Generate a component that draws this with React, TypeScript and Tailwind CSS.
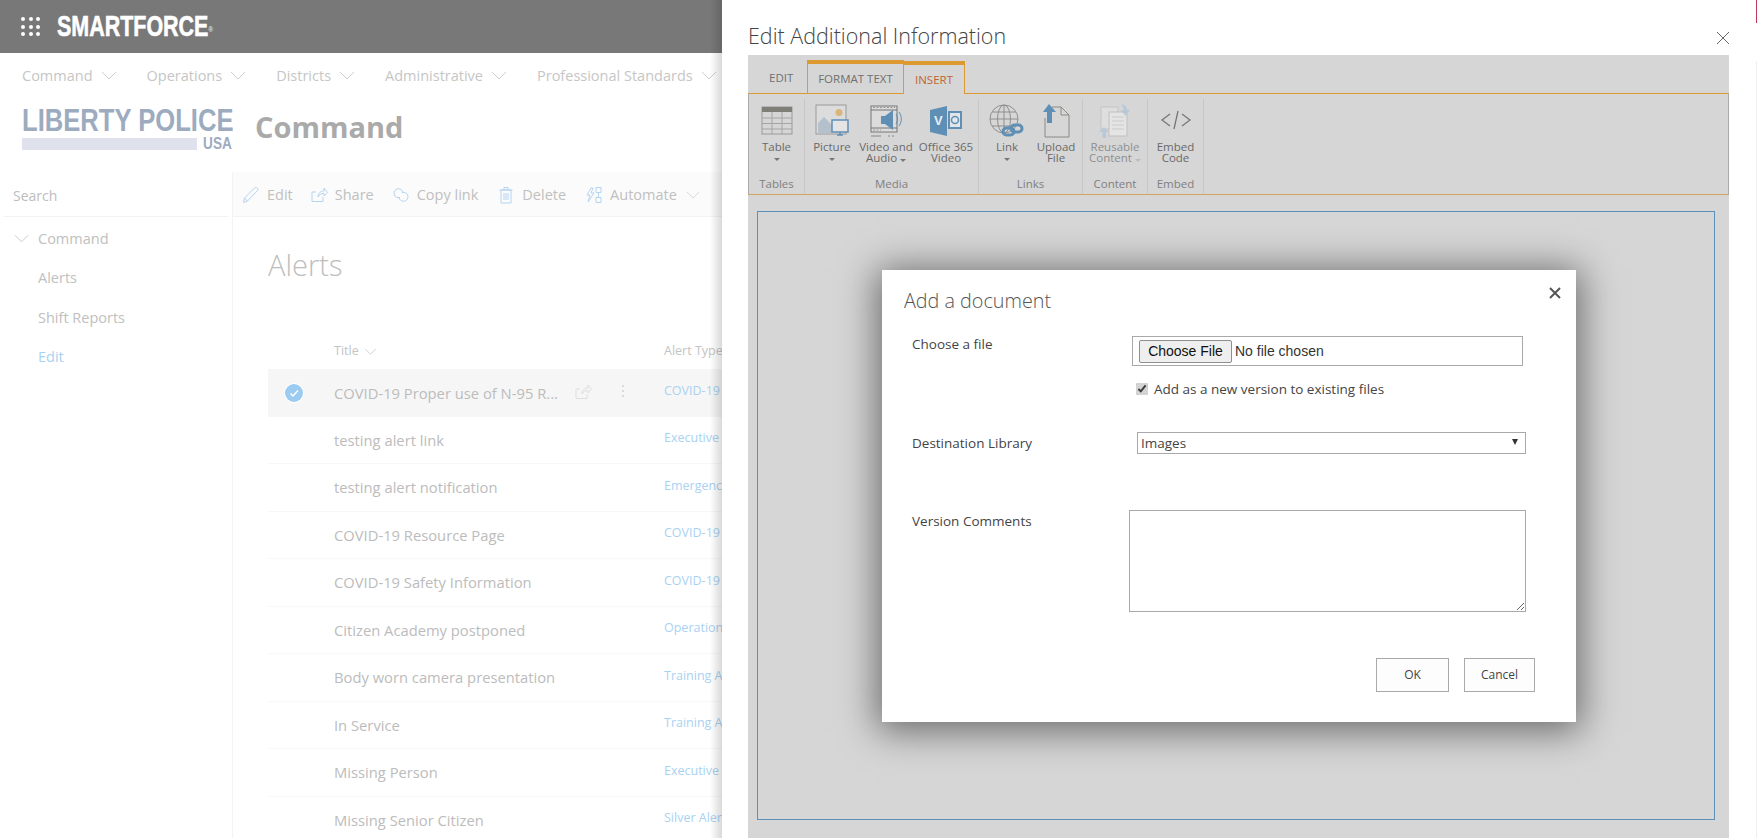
const font = "font-['Open_Sans','Liberation_Sans',sans-serif]";

const navItems = ["Command", "Operations", "Districts", "Administrative", "Professional Standards"];

const rows = [
  { title: "COVID-19 Proper use of N-95 R...", type: "COVID-19", selected: true },
  { title: "testing alert link", type: "Executive" },
  { title: "testing alert notification", type: "Emergency" },
  { title: "COVID-19 Resource Page", type: "COVID-19" },
  { title: "COVID-19 Safety Information", type: "COVID-19" },
  { title: "Citizen Academy postponed", type: "Operations" },
  { title: "Body worn camera presentation", type: "Training A" },
  { title: "In Service", type: "Training A" },
  { title: "Missing Person", type: "Executive" },
  { title: "Missing Senior Citizen", type: "Silver Alert" },
];

function Chevron({ className }: { className?: string }) {
  return (
    <svg viewBox="0 0 16 9" className={className} fill="none" stroke="currentColor" strokeWidth="1">
      <path d="M1 1l7 7 7-7" />
    </svg>
  );
}

function CommandIcon({ kind }: { kind: string }) {
  return (
    <svg viewBox="0 0 18 18" className="h-[18px] w-[18px] text-[#b4d4f0]" fill="none" stroke="currentColor" strokeWidth="1">
      {kind === "edit" && <path d="M1.500 16.500l1-4.500L12.500 2c.8-.8 2-.8 2.800 0s.8 2 0 2.800L5.500 15zM2.500 12l3 3" />}
      {kind === "share" && <path d="M13 11v4.500H2V6h4M8 11c0-4 2.500-6 6-6V2l3.500 4.500L14 10V7.500c-3 0-5 1-6 3.500z" />}
      {kind === "link" && (
        <>
          <path d="M8 11.500a4.500 4.500 0 1 1 3-5" />
          <path d="M10 6.500a4.500 4.500 0 1 1-3 5" />
        </>
      )}
      {kind === "delete" && <path d="M4 4h10v13H4zM2.500 4h13M7 4V1.500h4V4M7 7v7M9 7v7M11 7v7" />}
      {kind === "automate" && <path d="M11 1.500h5v5h-5zM11 11.500h5v5h-5zM13.500 6.500v5M6 2L2 9h3l-2 7 6-9H6l2-5z" />}
    </svg>
  );
}

function Background() {
  return (
    <div className={`h-[838px] w-[722px] overflow-hidden bg-white ${font}`}>
      <div className="flex h-[53px] items-center bg-[#787878]">
        <div className="ml-[21px] grid w-[19px] grid-cols-3 gap-[3.500px]">
          {[0, 1, 2, 3, 4, 5, 6, 7, 8].map((i) => (
            <span key={i} className="h-[4px] w-[4px] rounded-full bg-white" />
          ))}
        </div>
        <span className="ml-[17px] origin-left scale-x-[0.74] font-['Liberation_Sans',sans-serif] text-[29px] font-bold whitespace-nowrap text-white [-webkit-text-stroke:0.6px_white]">
          SMARTFORCE<sup className="text-[8px] font-normal [-webkit-text-stroke:0]">®</sup>
        </span>
      </div>
      <div className="flex h-[45px] items-center pl-[22px] text-[14.500px] text-[#c6c6c6]">
        {navItems.map((item) => (
          <div key={item} className="mr-[30px] flex shrink-0 items-center gap-[8px]">
            <span>{item}</span>
            <Chevron className="h-[9px] w-[16px] text-[#cfcfcf]" />
          </div>
        ))}
      </div>
      <div className="flex h-[74px] items-start pl-[22px]">
        <div className="mt-[10px] w-[210px] shrink-0">
          <div className="origin-left scale-x-[0.8] font-['Liberation_Sans',sans-serif] text-[32px] leading-[25px] font-bold whitespace-nowrap text-[#9dabbf]">
            LIBERTY POLICE
          </div>
          <div className="mt-[5px] flex items-center justify-between">
            <div className="h-[12px] w-[175px] bg-[#dfe2ec]" />
            <span className="origin-right scale-x-[0.85] font-['Liberation_Sans',sans-serif] text-[16px] leading-[12px] font-bold text-[#9dabbf]">USA</span>
          </div>
        </div>
        <div className="mt-[11px] ml-[23px] text-[29px] leading-[36px] font-bold text-[#aaaaaa]">Command</div>
      </div>
      <div className="flex">
        <div className="h-[666px] w-[233px] shrink-0 border-r border-[#f3f3f3]">
          <div className="mx-[4px] flex h-[45px] items-center border-b border-[#f3f3f3] pt-[2px] pl-[9px] text-[14px] text-[#bdbdbd]">Search</div>
          <div className="mt-[2px] flex h-[39.500px] items-center pl-[14px] text-[14.500px] text-[#c0c0c0]">
            <Chevron className="mr-[9px] h-[9px] w-[15px] text-[#c8c8c8]" />
            Command
          </div>
          <div className="flex h-[39.500px] items-center pl-[38px] text-[14.500px] text-[#c0c0c0]">Alerts</div>
          <div className="flex h-[39.500px] items-center pl-[38px] text-[14.500px] text-[#c0c0c0]">Shift Reports</div>
          <div className="flex h-[39.500px] items-center pl-[38px] text-[14.500px] text-[#a9d2f2]">Edit</div>
        </div>
        <div className="min-w-0 flex-1">
          <div className="flex h-[45px] items-center border-b border-[#f3f3f3] bg-[#fbfbfb] pt-[2px] pl-[9px] text-[14.500px] whitespace-nowrap text-[#c0c0c0]">
            <div className="mr-[17px] flex items-center gap-[7px]"><CommandIcon kind="edit" />Edit</div>
            <div className="mr-[18px] flex items-center gap-[7px]"><CommandIcon kind="share" />Share</div>
            <div className="mr-[19px] flex items-center gap-[7px]"><CommandIcon kind="link" />Copy link</div>
            <div className="mr-[19px] flex items-center gap-[7px]"><CommandIcon kind="delete" />Delete</div>
            <div className="flex items-center gap-[7px]"><CommandIcon kind="automate" />Automate<Chevron className="ml-[2px] h-[8px] w-[14px] text-[#d4d4d4]" /></div>
          </div>
          <div className="pl-[35px]">
            <div className="h-[106px] pt-[26px] text-[29px] leading-[44px] font-light text-[#bdbdbd]">Alerts</div>
            <div className="flex h-[46px] items-center pt-[10px] text-[12.500px] whitespace-nowrap text-[#c4c4c4]">
              <div className="ml-[66px] flex w-[330px] shrink-0 items-center gap-[5px]">
                Title
                <Chevron className="h-[7px] w-[13px]" />
              </div>
              <div>Alert Type</div>
            </div>
            {rows.map((row) => (
              <div
                key={row.title}
                className={`flex h-[47.500px] items-center overflow-hidden whitespace-nowrap ${row.selected ? "bg-[#f6f6f6]" : "border-b border-[#f8f8f8]"}`}
              >
                <div className="flex w-[66px] shrink-0 pl-[17px]">
                  {row.selected && (
                    <span className="flex h-[18px] w-[18px] items-center justify-center rounded-full bg-[#9ccbf1] ring-1 ring-white">
                      <svg viewBox="0 0 10 10" className="h-[10px] w-[10px]" fill="none" stroke="white" strokeWidth="1.500">
                        <path d="M1.500 5.500l2.500 2.500 5-5.500" />
                      </svg>
                    </span>
                  )}
                </div>
                <div className="relative w-[330px] shrink-0 text-[14.750px] text-[#bcbcbc]">
                  {row.title}
                  {row.selected && (
                    <>
                      <svg viewBox="0 0 18 18" className="absolute top-[1px] left-[240px] h-[18px] w-[18px] text-[#dedede]" fill="none" stroke="currentColor" strokeWidth="1">
                        <path d="M13 11v4.500H2V6h4M8 11c0-4 2.500-6 6-6V2l3.500 4.500L14 10V7.500c-3 0-5 1-6 3.500z" />
                      </svg>
                      <span className="absolute top-[3px] left-[288px] flex flex-col gap-[3px]">
                        <i className="h-[2px] w-[2px] rounded-full bg-[#d0d0d0]" />
                        <i className="h-[2px] w-[2px] rounded-full bg-[#d0d0d0]" />
                        <i className="h-[2px] w-[2px] rounded-full bg-[#d0d0d0]" />
                      </span>
                    </>
                  )}
                </div>
                <div className="mb-[2px] shrink-0 text-[12.500px] text-[#a9d2f2]">{row.type}</div>
              </div>
            ))}
          </div>
        </div>
      </div>
    </div>
  );
}

function TableIcon() {
  return (
    <svg viewBox="0 0 32 29" className="h-[29px] w-[32px]">
      <rect x="1" y="1" width="30" height="27" fill="#d6d6d6" stroke="#999" />
      <rect x="1" y="1" width="30" height="5" fill="#7f7f78" />
      <path d="M1 12h30M1 17.500h30M1 23h30M11 6v22M21 6v22" stroke="#a5a5a5" />
    </svg>
  );
}

function PictureIcon() {
  return (
    <svg viewBox="0 0 34 34" className="h-[34px] w-[34px]">
      <rect x="1" y="1" width="30" height="29" fill="#dcdcdc" stroke="#9a9a9a" />
      <circle cx="24" cy="8.500" r="3.500" fill="#d8b67a" />
      <path d="M3 29V19l6-6 8 8v8z" fill="#b4c1cc" />
      <rect x="17" y="16" width="16" height="12" fill="#e4e4e4" stroke="#5f8fb5" strokeWidth="1.500" />
      <path d="M22 31h6M25 28v3" stroke="#5f8fb5" strokeWidth="1.500" />
    </svg>
  );
}

function VideoIcon() {
  return (
    <svg viewBox="0 0 36 34" className="ml-[3px] h-[34px] w-[36px]">
      <rect x="1" y="2" width="26" height="26" fill="#dcdcdc" stroke="#777" />
      <path d="M1 6h26M1 24h26" stroke="#777" />
      <path d="M3 3.500h22M3 26h8" stroke="#999" strokeDasharray="2 1.500" />
      <path d="M11 12h4l8-6v20l-8-6h-4z" fill="#5f8fb5" />
      <path d="M26 10c2 3 2 7 0 10M29 8c3 4 3 10 0 14" stroke="#5f8fb5" fill="none" />
      <path d="M1 32h10M18 32h2M22 32h2" stroke="#888" />
    </svg>
  );
}

function OfficeVideoIcon() {
  return (
    <svg viewBox="0 0 34 32" className="h-[32px] w-[34px]">
      <path d="M1 5L18 1v30L1 27z" fill="#5f8fb5" />
      <text x="5" y="20" fontSize="13" fontWeight="700" fill="#e6eef4" fontFamily="Liberation Sans">V</text>
      <rect x="20" y="7" width="12" height="16" fill="#e2e6ea" stroke="#5f8fb5" strokeWidth="2" />
      <circle cx="26" cy="15" r="3.500" fill="none" stroke="#5f8fb5" strokeWidth="1.500" />
    </svg>
  );
}

function LinkIcon() {
  return (
    <svg viewBox="0 0 36 34" className="h-[34px] w-[36px]">
      <g fill="none" stroke="#8f8f8f">
        <circle cx="15" cy="15" r="14" />
        <ellipse cx="15" cy="15" rx="6.500" ry="14" />
        <path d="M15 1v28M1 15h28M3 8h24M3 22h24" />
      </g>
      <g fill="none" stroke="#5f8fb5" strokeWidth="3">
        <rect x="14" y="24" width="11" height="7" rx="3.500" />
        <rect x="22" y="21" width="11" height="7" rx="3.500" />
      </g>
    </svg>
  );
}

function UploadIcon() {
  return (
    <svg viewBox="0 0 28 34" className="h-[34px] w-[28px]">
      <path d="M3 33V14M10 3h9l8 8v22H3" fill="none" stroke="#8a8a85" />
      <path d="M19 3v8h8" fill="none" stroke="#8a8a85" />
      <path d="M7 0l7 8h-4v11H5V8H1z" fill="#5f8fb5" />
    </svg>
  );
}

function ReusableIcon() {
  return (
    <svg viewBox="0 0 36 36" className="h-[36px] w-[36px]">
      <rect x="4" y="4" width="17" height="22" fill="#dedede" stroke="#c4c4c4" />
      <rect x="12" y="9" width="18" height="24" fill="#e4e4e4" stroke="#c0c0c0" />
      <path d="M15 14h12M15 18h12M15 22h12M15 26h12" stroke="#cacaca" />
      <path d="M25 1c3 1 5 3 5 6h3l-4.500 6L24 7h3c0-2-1-3-2-4z" fill="#b7c9d8" />
      <path d="M7 24l4.500 5H9v6H6c-1-2-1-4 0-6H2z" fill="#b7c9d8" />
    </svg>
  );
}

function EmbedIcon() {
  return (
    <svg viewBox="0 0 32 20" className="mb-[2px] h-[20px] w-[32px]" fill="none" stroke="#777" strokeWidth="1.300">
      <path d="M10 4l-8 6 8 6M22 4l8 6-8 6M18 1l-4 18" />
    </svg>
  );
}

function Arrow({ light }: { light?: boolean }) {
  return <span className={`inline-block h-0 w-0 border-x-[3px] border-t-[3px] border-x-transparent ${light ? "border-t-[#bbbbbb]" : "border-t-[#777777]"}`} />;
}

function RibbonButton({
  icon,
  label,
  second,
  width,
  arrow,
  dim,
}: {
  icon: React.ReactNode;
  label: string;
  second?: React.ReactNode;
  width: string;
  arrow?: boolean;
  dim?: boolean;
}) {
  return (
    <div className={`flex shrink-0 flex-col items-center ${width} text-[11.500px] leading-[11px] ${dim ? "text-[#8e8e8e]" : "text-[#6a6a6a]"}`}>
      <div className="mt-[3px] flex h-[37px] items-center justify-center">{icon}</div>
      <div className="mt-[2px] whitespace-nowrap">{label}</div>
      {second && <div className="whitespace-nowrap">{second}</div>}
      {arrow && <div className="mt-[3px] flex h-[8px] items-center"><Arrow /></div>}
    </div>
  );
}

function RibbonGroup({ label, width, children, start }: { label: string; width: string; children: React.ReactNode; start?: boolean }) {
  return (
    <div className={`flex ${width} shrink-0 flex-col border-r border-[#c8c8c8]`}>
      <div className={`flex h-[77px] ${start ? "justify-start" : "justify-center"}`}>{children}</div>
      <div className="text-center text-[11.500px] leading-[16px] text-[#808080]">{label}</div>
    </div>
  );
}

function Ribbon() {
  return (
    <>
      <div className="flex h-[37px] items-end pl-[21px] text-[11.500px] leading-[16px]">
        <div className="flex h-[31px] w-[38px] items-center text-[#707070]">EDIT</div>
        <div className="flex h-[33px] w-[97px] items-center justify-center border-x border-t-[4px] border-x-[#dd9a30] border-t-[#dd9a30] text-[#6f6f6f]">FORMAT TEXT</div>
        <div className="relative top-[1px] z-10 flex h-[33px] w-[61px] items-center justify-center border-r border-t-[4px] border-r-[#dd9a30] border-t-[#dd9a30] bg-[#d6d6d6] text-[#c0652e]">INSERT</div>
      </div>
      <div className="flex h-[102px] border-x border-b border-t border-x-[#aaaaaa] border-t-[#dd9a30] border-b-[#d2a35c] pt-[5px]">
        <RibbonGroup label="Tables" width="w-[56px]">
          <RibbonButton icon={<TableIcon />} label="Table" width="w-[50px]" arrow />
        </RibbonGroup>
        <RibbonGroup label="Media" width="w-[174px]" start>
          <RibbonButton icon={<PictureIcon />} label="Picture" width="w-[54px]" arrow />
          <RibbonButton icon={<VideoIcon />} label="Video and" second={<>Audio <Arrow /></>} width="w-[54px]" />
          <RibbonButton icon={<OfficeVideoIcon />} label="Office 365" second="Video" width="w-[66px]" />
        </RibbonGroup>
        <RibbonGroup label="Links" width="w-[104px]" start>
          <RibbonButton icon={<LinkIcon />} label="Link" width="w-[56px]" arrow />
          <RibbonButton icon={<UploadIcon />} label="Upload" second="File" width="w-[42px]" />
        </RibbonGroup>
        <RibbonGroup label="Content" width="w-[65px]">
          <RibbonButton icon={<ReusableIcon />} label="Reusable" second={<>Content <Arrow light /></>} width="w-[60px]" dim />
        </RibbonGroup>
        <RibbonGroup label="Embed" width="w-[56px]">
          <RibbonButton icon={<EmbedIcon />} label="Embed" second="Code" width="w-[50px]" />
        </RibbonGroup>
      </div>
    </>
  );
}

function Dialog() {
  return (
    <div className="absolute top-[270px] left-[160px] h-[452px] w-[694px] bg-white pt-[16px] text-[13.500px] text-[#444444] shadow-[0_4px_35px_5px_rgba(0,0,0,0.5)]">
      <svg viewBox="0 0 12 12" className="absolute top-[17px] right-[15px] h-[12px] w-[12px]" fill="none" stroke="#555" strokeWidth="2">
        <path d="M1 1l10 10M11 1L1 11" />
      </svg>
      <div className="pl-[22px] text-[19.750px] leading-[30px] font-light text-[#555555]">Add a document</div>
      <div className="mt-[20px] flex">
        <div className="w-[250px] pl-[30px] leading-[16px]">Choose a file</div>
        <div>
          <div className="flex h-[30px] w-[391px] items-center border border-[#a9a9a9] px-[6px]">
            <input
              type="file"
              className="w-full font-['Liberation_Sans',sans-serif] text-[14px] text-[#333333] file:mr-[3px] file:h-[23px] file:w-[93px] file:rounded-[2px] file:border file:border-[#8f8f8f] file:bg-[#efefef] file:text-[14px] file:text-[#111111]"
            />
          </div>
          <label className="mt-[14px] ml-[4px] flex items-center gap-[6px] leading-[18px]">
            <input type="checkbox" defaultChecked className="h-[12px] w-[12px] accent-[#d4d4d4]" />
            Add as a new version to existing files
          </label>
        </div>
      </div>
      <div className="mt-[34px] flex items-center">
        <div className="w-[255px] pl-[30px]">Destination Library</div>
        <div className="relative h-[22px] w-[389px]">
          <select className="h-full w-full appearance-none rounded-none border border-[#a9a9a9] bg-white pl-[3px] text-[13.500px] text-[#444444]">
            <option>Images</option>
          </select>
          <span className="absolute top-[7px] right-[8px] h-0 w-0 border-x-[3px] border-t-[6px] border-x-transparent border-t-[#333333]" />
        </div>
      </div>
      <div className="mt-[56px] flex">
        <div className="w-[247px] pt-[1px] pl-[30px]">Version Comments</div>
        <textarea className="h-[102px] w-[397px] border border-[#a9a9a9] bg-white" />
      </div>
      <div className="mt-[46px] flex justify-end gap-[15px] pr-[41px] text-[12px]">
        <div className="flex h-[34px] w-[73px] items-center justify-center border border-[#a9a9a9] bg-[#fdfdfd]">OK</div>
        <div className="flex h-[34px] w-[71px] items-center justify-center border border-[#a9a9a9] bg-[#fdfdfd]">Cancel</div>
      </div>
    </div>
  );
}

function Panel() {
  return (
    <div className={`absolute top-0 left-[722px] h-[838px] w-[1035px] overflow-hidden bg-white ${font}`}>
      <div className="flex h-[55px] items-start justify-between pr-[27px] pl-[26px]">
        <div className="mt-[19px] text-[21.500px] leading-[34px] font-light whitespace-nowrap text-[#444444]">Edit Additional Information</div>
        <svg viewBox="0 0 14 14" className="mt-[31px] h-[14px] w-[14px]" fill="none" stroke="#666" strokeWidth="1">
          <path d="M1 1l12 12M13 1L1 13" />
        </svg>
      </div>
      <div className="ml-[26px] h-[783px] w-[981px] bg-[#d6d6d6] pt-[1px]">
        <Ribbon />
        <div className="mx-[9px] mt-[16px] h-[609px] w-[958px] border border-[#5a90b9]" />
      </div>
      <Dialog />
      <div className="absolute top-0 right-0 h-[23px] w-px bg-[#c2385a]" />
      <div className="absolute top-[61px] right-0 bottom-0 w-px bg-[#efefef]" />
    </div>
  );
}

export default function App() {
  return (
    <div className="relative h-[838px] w-[1757px] overflow-hidden bg-white">
      <Background />
      <div className="absolute top-0 left-[710px] h-[838px] w-[12px] bg-gradient-to-r from-transparent to-black/15" />
      <Panel />
    </div>
  );
}
